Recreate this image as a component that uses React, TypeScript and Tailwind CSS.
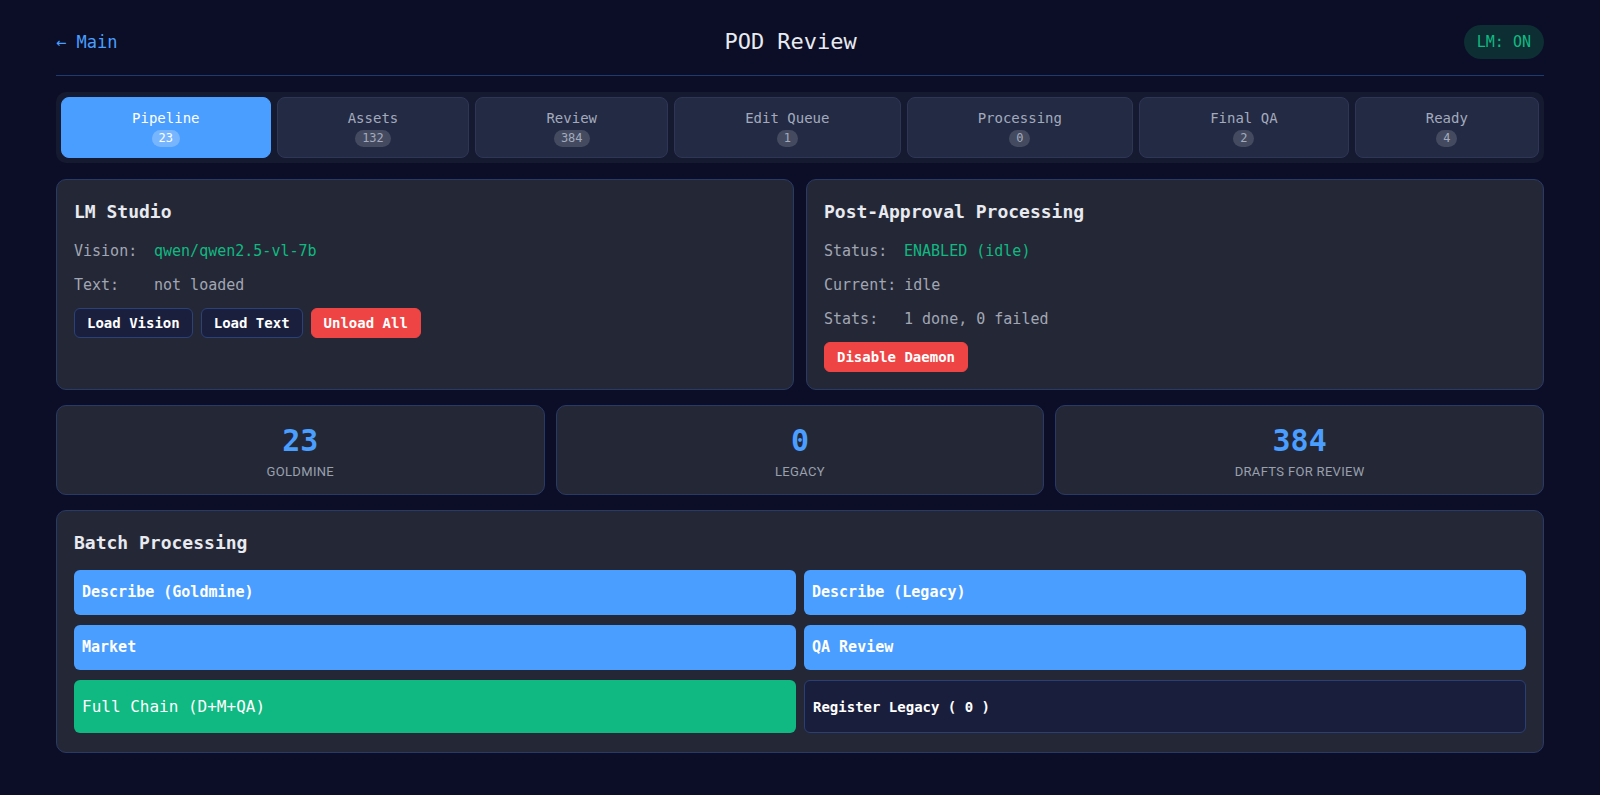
const tabs = [
  { label: "Pipeline", count: 23, active: true },
  { label: "Assets", count: 132 },
  { label: "Review", count: 384 },
  { label: "Edit Queue", count: 1 },
  { label: "Processing", count: 0 },
  { label: "Final QA", count: 2 },
  { label: "Ready", count: 4 },
];

const stats = [
  { value: 23, label: "Goldmine" },
  { value: 0, label: "Legacy" },
  { value: 384, label: "Drafts for Review" },
];

function Row({ label, children }: { label: string; children: React.ReactNode }) {
  return (
    <div className="flex text-[15px] leading-[22px]">
      <span className="mr-2 inline-block min-w-[72px] text-[#a1a6b4]">{label}</span>
      {children}
    </div>
  );
}

const card = "rounded-[10px] border border-[#2a3a66] bg-[#242836] px-[17px]";
const smallBtn = "rounded-md border px-3 py-1 text-sm font-bold leading-5 text-white";
const blueBtn = "h-[45px] rounded-md bg-[#4a9eff] px-2 text-left text-[15px] font-bold text-white";

export default function App() {
  return (
    <div className="min-h-screen bg-[#0b0e26] px-14 pt-[25px] pb-10 font-['DejaVu_Sans_Mono',monospace] text-[#e8eaf0]">
      <header className="flex items-center justify-between border-b border-[#1f3a6e] pb-4">
        <a href="#" className="text-[17px] leading-6 text-[#4a9eff]">
          ← Main
        </a>
        <h1 className="text-[22px] leading-7">POD Review</h1>
        <span className="rounded-full bg-[#0d2e33] px-[13px] py-[7px] text-[15px] leading-5 text-[#10b981]">
          LM: ON
        </span>
      </header>

      <nav className="mt-4 flex gap-[6px] rounded-[10px] bg-[#161a30] p-[5px]">
        {tabs.map((t) => (
          <button
            key={t.label}
            className={
              t.active
                ? "flex flex-auto flex-col items-center gap-0.5 rounded-lg border border-[#4a9eff] bg-[#4a9eff] py-[10px] text-white"
                : "flex flex-auto flex-col items-center gap-0.5 rounded-lg border border-[#2e3656] bg-[#232a44] py-[10px] text-[#a3aabd]"
            }
          >
            <span className="text-sm leading-5">{t.label}</span>
            <span
              className={
                t.active
                  ? "rounded-full bg-white/25 px-[7px] text-xs leading-[17px]"
                  : "rounded-full bg-[#444b60] px-[7px] text-xs leading-[17px]"
              }
            >
              {t.count}
            </span>
          </button>
        ))}
      </nav>

      <div className="mt-4 grid grid-cols-2 gap-3">
        <section className={`${card} pt-[20px] pb-[17px]`}>
          <h2 className="mb-4 text-[18px] font-bold leading-6">LM Studio</h2>
          <div className="flex flex-col gap-3">
            <Row label="Vision:">
              <span className="text-[#10b981]">qwen/qwen2.5-vl-7b</span>
            </Row>
            <Row label="Text:">
              <span className="text-[#a1a6b4]">not loaded</span>
            </Row>
            <div className="flex gap-2">
              <button className={`${smallBtn} border-[#2c4177] bg-[#1a1f3e]`}>Load Vision</button>
              <button className={`${smallBtn} border-[#2c4177] bg-[#1a1f3e]`}>Load Text</button>
              <button className={`${smallBtn} border-[#ef4444] bg-[#ef4444]`}>Unload All</button>
            </div>
          </div>
        </section>

        <section className={`${card} pt-[20px] pb-[17px]`}>
          <h2 className="mb-4 text-[18px] font-bold leading-6">Post-Approval Processing</h2>
          <div className="flex flex-col gap-3">
            <Row label="Status:">
              <span className="text-[#10b981]">ENABLED (idle)</span>
            </Row>
            <Row label="Current:">
              <span className="text-[#a1a6b4]">idle</span>
            </Row>
            <Row label="Stats:">
              <span className="text-[#a1a6b4]">1 done, 0 failed</span>
            </Row>
            <div className="flex">
              <button className={`${smallBtn} border-[#ef4444] bg-[#ef4444]`}>Disable Daemon</button>
            </div>
          </div>
        </section>
      </div>

      <div className="mt-[15px] grid grid-cols-3 gap-[11px]">
        {stats.map((s) => (
          <div
            key={s.label}
            className="flex flex-col items-center rounded-[10px] border border-[#2a3a66] bg-[#242836] pt-[17px] pb-[14px]"
          >
            <span className="text-[30px] font-bold leading-9 text-[#4a9eff]">{s.value}</span>
            <span className="mt-1 font-['Roboto',sans-serif] text-[13px] uppercase leading-[17px] tracking-wide text-[#9aa0ae]">
              {s.label}
            </span>
          </div>
        ))}
      </div>

      <section className={`${card} mt-[15px] pt-[19px] pb-[19px]`}>
        <h2 className="mb-[14px] text-[18px] font-bold leading-[26px]">Batch Processing</h2>
        <div className="grid grid-cols-2 gap-x-2 gap-y-[10px]">
          <button className={blueBtn}>Describe (Goldmine)</button>
          <button className={blueBtn}>Describe (Legacy)</button>
          <button className={blueBtn}>Market</button>
          <button className={blueBtn}>QA Review</button>
          <button className="h-[53px] rounded-md bg-[#10b981] px-2 text-left text-base text-white">
            Full Chain (D+M+QA)
          </button>
          <button className="h-[53px] rounded-md border border-[#2c3f73] bg-[#1a1e3d] px-2 text-left text-sm font-bold text-white">
            Register Legacy ( 0 )
          </button>
        </div>
      </section>
    </div>
  );
}
